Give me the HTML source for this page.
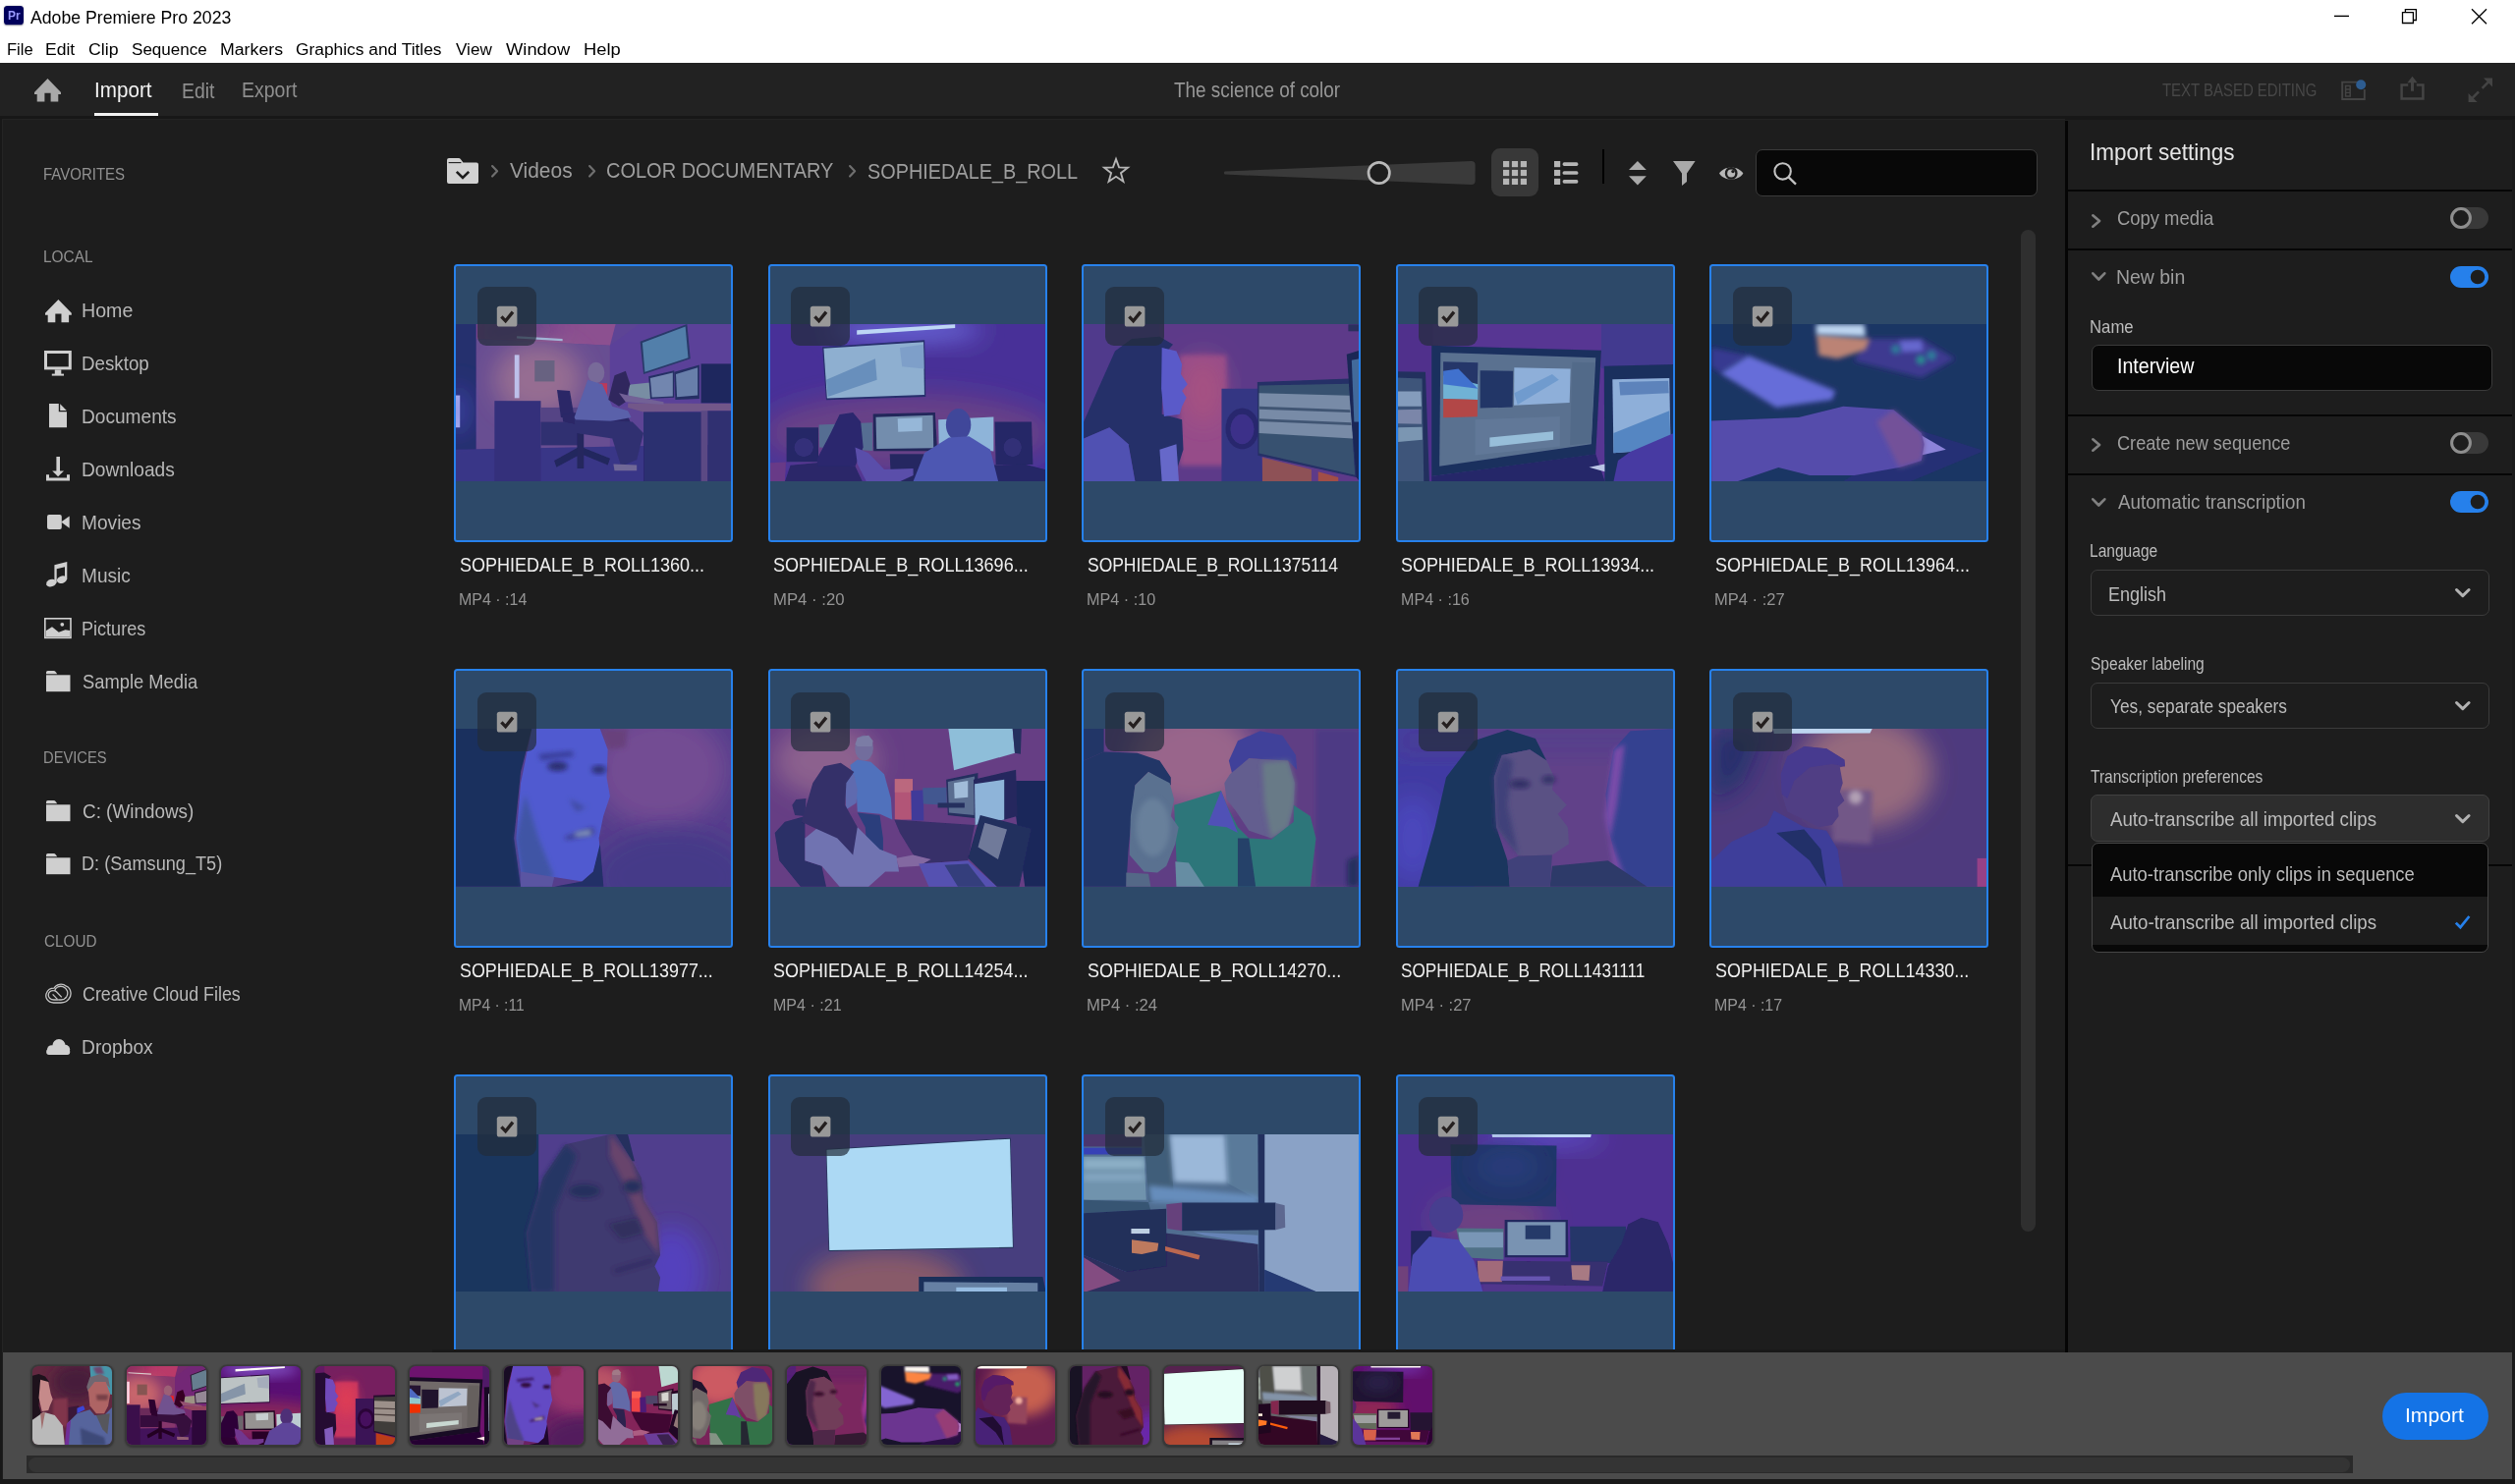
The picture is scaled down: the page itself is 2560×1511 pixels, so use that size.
<!DOCTYPE html>
<html lang="en"><head><meta charset="utf-8"><title>Adobe Premiere Pro 2023</title>
<style>
html,body{margin:0;padding:0}body{width:2560px;height:1511px;position:relative;overflow:hidden;background:#1d1d1d;font-family:"Liberation Sans", sans-serif}
.t{position:absolute;white-space:nowrap;line-height:1;transform-origin:0 50%;display:block}

.i{position:absolute;display:block;overflow:visible}
.b{position:absolute;display:block}
#titlebar{left:0;top:0;width:2560px;height:64px;background:#fff}
#wsbar{left:0;top:64px;width:2560px;height:54px;background:#222}
#wsline{left:0;top:118px;width:2560px;height:3.5px;background:#171717}
#leftedge{left:0;top:121px;width:2.2px;height:1390px;background:#181818}
#leftline{left:2.2px;top:121px;width:1px;height:1256px;background:#242424}
#ptop{left:2px;top:121px;width:2099.6px;height:1.4px;background:#232323}
#rightedge{left:2557.4px;top:121px;width:2.6px;height:1390px;background:#1a1a1a}
#tabline{left:96px;top:114.6px;width:65px;height:3.6px;background:#f2f2f2}
#vdiv{left:2101.6px;top:123.4px;width:3.2px;height:1254px;background:#050505}
.hl{position:absolute;left:2104.8px;width:452.6px;height:2px;background:#060606}
.card{position:absolute;width:283.8px;height:283.4px;box-sizing:border-box;border:2px solid #2781ec;border-radius:3.5px;background:#323232;overflow:hidden}
.card svg.im{position:absolute;left:-1px;top:59.1px;display:block}
.card .ov{position:absolute;left:0;top:0;right:0;bottom:0;background:#2680eb;opacity:.3}
.field{position:absolute;box-sizing:border-box;border:1.6px solid #3b3b3b;border-radius:7px}
#tray{left:3px;top:1377px;width:2554.4px;height:129px;background:#4b4b4b}
#below{left:0;top:1506px;width:2560px;height:5px;background:#191919}
.tt{position:absolute;top:1390.6px;width:81.2px;height:80.6px;border-radius:6px;overflow:hidden;box-shadow:0 0 0 1.6px #393939,0 1px 2px 1.5px rgba(0,0,0,.3)}
.tt svg{display:block}
#strack{left:27px;top:1482px;width:2368px;height:18.4px;background:#2a2a2a}
#sthumb{left:28.6px;top:1483.6px;width:2363px;height:15.2px;border-radius:8px;background:#343434}
#importbtn{left:2425.4px;top:1417.8px;width:108px;height:48.4px;border-radius:24.2px;background:#1473e6}
#gband{left:440px;top:1373.6px;width:1661.6px;height:3.6px;background:#191919}
#vscroll{left:2057.4px;top:234px;width:15px;height:1020px;border-radius:7.5px;background:#2f2f2f}

</style></head>
<body>
<svg width="0" height="0" style="position:absolute;left:0;top:0"><defs><filter id="bl" x="-50%" y="-50%" width="200%" height="200%"><feGaussianBlur stdDeviation="110"/></filter><filter id="bs" x="-30%" y="-30%" width="160%" height="160%"><feGaussianBlur stdDeviation="22"/></filter><filter id="bg" x="0" y="0" width="100%" height="100%"><feGaussianBlur stdDeviation="7"/></filter><g id="sc0"><rect x="0" y="0" width="2515" height="1452" fill="#762a6f"/><polygon points="200,17 1450,17 1400,210 200,150" fill="#b93a69"/><polygon points="200,17 1000,17 700,170 200,150" fill="#581752" filter="url(#bl)"/><polygon points="200,150 1400,210 1400,1437 200,1437" fill="#86376c"/><ellipse cx="760" cy="520" rx="400" ry="330" fill="#c7656c" filter="url(#bl)"/><polygon points="1400,210 1660,17 2490,17 2490,760 1400,760" fill="#732776"/><rect x="0" y="17" width="200" height="1420" fill="#250a39"/><polygon points="0,1150 2490,1100 2490,1437 0,1437" fill="#43135b"/><rect x="18" y="660" width="38" height="290" fill="#ffdcf9"/><ellipse cx="37" cy="800" rx="90" ry="230" fill="#6942c9" filter="url(#bl)" opacity=".6"/><rect x="545" y="295" width="42" height="390" fill="#ffdbea"/><polygon points="565,125 975,150 975,170 565,145" fill="#d7cbcc"/><rect x="725" y="345" width="178" height="190" fill="#865552"/><rect x="365" y="710" width="415" height="727" fill="#3b0f4b"/><rect x="780" y="770" width="330" height="340" fill="#6b2a5a"/><rect x="780" y="900" width="330" height="210" fill="#360c3d"/><polygon points="1670,175 2090,17 2120,330 1700,470" fill="#2c1a32"/><polygon points="1690,185 2075,40 2100,320 1712,450" fill="#667e8f"/><polygon points="1565,565 1760,545 1760,690 1565,700" fill="#9c9384"/><polygon points="1745,490 1975,435 1975,680 1762,690" fill="#250c2b"/><polygon points="1760,505 1962,455 1962,668 1775,678" fill="#948895"/><polygon points="1975,450 2200,385 2200,690 1985,700" fill="#250c2b"/><polygon points="1990,468 2185,410 2185,660 2000,675" fill="#867e8f"/><rect x="2215" y="375" width="275" height="355" fill="#1f0224"/><polygon points="1560,730 2490,735 2490,800 1700,810 1560,770" fill="#94455f"/><rect x="1700" y="810" width="530" height="627" fill="#2d073a"/><rect x="2215" y="800" width="60" height="637" fill="#733259"/><rect x="2275" y="800" width="215" height="637" fill="#360a3d"/><rect x="1300" y="550" width="75" height="160" fill="#fc1c1c"/><polygon points="925,610 1040,620 1080,860 960,860" fill="#2d022f"/><polygon points="900,1250 1130,1120 1400,1230 1380,1290 1140,1190 920,1310" fill="#230022"/><rect x="1105" y="900" width="60" height="420" fill="#250024"/><polygon points="970,830 1250,800 1560,850 1600,940 1300,960 980,900" fill="#2d022f"/><ellipse cx="1275" cy="455" rx="75" ry="95" fill="#9c6076"/><polygon points="1080,860 1200,520 1330,560 1420,760 1560,800 1590,860 1380,900 1100,900" fill="#71528f"/><polygon points="1080,880 1600,900 1700,1000 1640,1240 1500,1300 1420,1050 1100,1000" fill="#360f3d"/><polygon points="1430,1280 1640,1290 1640,1340 1440,1340" fill="#915d73"/><polygon points="1385,700 1440,480 1540,440 1580,560 1540,720 1480,760" fill="#360022"/><polygon points="1480,640 1560,660 1880,720 1880,745 1540,720" fill="#945271"/></g><g id="sc1"><rect x="0" y="0" width="2515" height="1452" fill="#580f74"/><ellipse cx="1250" cy="1000" rx="1300" ry="360" fill="#86275b" filter="url(#bl)"/><ellipse cx="1230" cy="70" rx="700" ry="120" fill="#916ae4" filter="url(#bl)" opacity=".8"/><polygon points="795,72 1675,20 1675,52 795,112" fill="#fffbf9"/><polygon points="486,222 1402,162 1412,672 520,702" fill="#280735"/><polygon points="498,236 1392,178 1400,655 528,686" fill="#bcc3c4"/><polygon points="520,520 960,330 975,520 535,672" fill="#8695a8"/><polygon points="1180,230 1392,200 1396,420 1200,400" fill="#a5adbb"/><polygon points="165,950 450,950 450,1260 165,1260" fill="#25002d"/><ellipse cx="320" cy="1130" rx="85" ry="85" fill="#3b0c48"/><polygon points="455,925 935,905 935,1160 460,1130" fill="#6b656c"/><polygon points="2030,900 2360,900 2372,1285 2040,1285" fill="#25002d"/><ellipse cx="2190" cy="1130" rx="80" ry="85" fill="#380c45"/><polygon points="1525,880 2020,855 2020,1165 1530,1100" fill="#bccbd1"/><polygon points="940,828 1496,814 1516,1162 945,1162" fill="#20001f"/><polygon points="965,856 1476,840 1482,1136 972,1142" fill="#969392"/><polygon points="1160,870 1380,862 1380,980 1165,990" fill="#c7cfd0"/><polygon points="1090,1190 1400,1190 1360,1437 1100,1437" fill="#280027"/><polygon points="10,1270 160,1262 150,1437 10,1437" fill="#861a5b"/><polygon points="150,1437 200,1292 500,1262 780,1300 845,1437" fill="#2d0032"/><polygon points="435,1240 560,1000 640,832 760,815 830,900 852,1130 780,1300 450,1300" fill="#2d0038"/><polygon points="780,1130 900,1180 1040,1330 1300,1320 1300,1382 1180,1437 880,1437 800,1280" fill="#71378f"/><polygon points="1520,1437 1600,1332 1900,1292 2300,1282 2490,1332 2490,1437" fill="#25002d"/><ellipse cx="1705" cy="925" rx="112" ry="145" fill="#4e2f77"/><polygon points="1300,1437 1400,1180 1620,1040 1800,1030 1990,1150 2062,1437" fill="#5e459a"/></g><g id="sc2"><rect x="0" y="0" width="2515" height="1452" fill="#761f5f"/><rect x="0" y="17" width="700" height="1420" fill="#631a64"/><rect x="880" y="295" width="420" height="1000" fill="#c7355e" filter="url(#bs)"/><ellipse cx="1090" cy="620" rx="170" ry="300" fill="#df3d54" filter="url(#bl)"/><rect x="2390" y="20" width="100" height="62" fill="#2d0724"/><polygon points="1255,600 1600,600 1622,1437 1255,1437" fill="#3b1456"/><ellipse cx="1440" cy="960" rx="150" ry="185" fill="#2b0438"/><ellipse cx="1440" cy="965" rx="105" ry="135" fill="#460f5e"/><polygon points="1575,540 2400,510 2472,1402 1580,1202" fill="#250c2d"/><polygon points="1590,572 2395,556 2450,1380 1590,1182" fill="#403d3a"/><polygon points="1590,640 2400,662 2430,1050 1590,1000" fill="#9c908a"/><polygon points="1590,760 2405,790 2408,815 1590,785" fill="#4e4240"/><polygon points="1590,870 2415,905 2418,930 1590,895" fill="#4e4240"/><polygon points="2375,290 2490,255 2490,1437 2462,1400" fill="#180019"/><polygon points="2420,342 2490,330 2490,900 2442,900" fill="#506079"/><polygon points="1620,1220 2060,1330 2060,1437 1620,1437" fill="#bc3d19"/><polygon points="2120,1350 2300,1400 2300,1437 2120,1437" fill="#d73700"/><polygon points="20,900 150,600 300,260 450,150 700,130 820,200 730,300 720,830 900,880 912,1150 820,1437 480,1437 420,1100 250,950 20,1050" fill="#250c32"/><polygon points="720,230 850,260 900,380 890,470 950,560 900,620 940,680 900,760 880,830 740,850 715,600" fill="#714abb"/><polygon points="20,1050 250,950 420,1100 480,1437 20,1437" fill="#633d9a"/><polygon points="700,1150 850,1100 872,1437 720,1437" fill="#835dbb"/></g><g id="sc3"><rect x="0" y="0" width="2515" height="1452" fill="#6e136e"/><rect x="0" y="17" width="330" height="1420" fill="#630c63"/><rect x="1840" y="17" width="650" height="400" fill="#501a68"/><polygon points="320,1390 1790,1190 1872,1437 320,1437" fill="#250032"/><polygon points="320,210 1840,255 1790,1192 320,1392" fill="#180c24"/><polygon points="400,275 1790,320 1750,1100 390,1300" fill="#716a69"/><polygon points="425,355 735,365 730,560 425,560" fill="#251432"/><polygon points="425,480 735,560 732,700 425,690" fill="#91c8cc"/><polygon points="425,690 732,700 730,852 425,862" fill="#ef2f00"/><polygon points="425,440 560,420 735,600 425,560" fill="#4e6ac2"/><polygon points="755,435 1050,440 1045,766 755,776" fill="#20142d"/><polygon points="1060,410 1565,420 1556,726 1058,750" fill="#bcc3d1"/><polygon points="1060,640 1400,470 1460,520 1090,745" fill="#91a7c2"/><polygon points="710,880 1470,850 1470,1120 710,1200" fill="#7b7574"/><polygon points="840,1040 1410,985 1410,1060 840,1126" fill="#c9d8d1"/><polygon points="1580,360 1780,365 1750,1090 1560,1110" fill="#66605e"/><polygon points="10,445 265,450 300,1437 10,1437" fill="#200c24"/><polygon points="10,500 235,510 250,1437 10,1437" fill="#484248"/><polygon points="15,625 225,625 230,760 15,760" fill="#aea8a8"/><polygon points="15,790 228,785 230,920 15,915" fill="#a1888d"/><polygon points="20,950 235,945 238,1060 20,1080" fill="#a1a09a"/><polygon points="1865,395 2490,380 2490,1437 1870,1437" fill="#180724"/><polygon points="1940,515 2450,505 2460,1050 2100,1170 1950,1180" fill="#bcc3d1"/><polygon points="1950,1000 2450,800 2460,1050 2100,1170 1950,1180" fill="#6b88b0"/><polygon points="2000,540 2440,530 2445,640 2010,660" fill="#7685a7"/><polygon points="1990,1250 2100,1170 2490,1000 2490,1437 1950,1437" fill="#561c83"/><polygon points="1730,1310 1870,1280 1870,1350" fill="#fce3e4"/></g><g id="sc4"><rect x="0" y="0" width="2515" height="1452" fill="#18132b"/><polygon points="20,230 350,300 100,460 20,400" fill="#401a69" filter="url(#bs)"/><polygon points="1400,150 1900,150 2200,330 1900,500 1300,350" fill="#481a69" filter="url(#bs)"/><polygon points="1700,170 1900,160 1920,260 1720,270" fill="#835dc2" filter="url(#bs)"/><ellipse cx="1670" cy="245" rx="42" ry="42" fill="#337877" filter="url(#bs)"/><ellipse cx="1895" cy="340" rx="42" ry="42" fill="#2c9369" filter="url(#bs)"/><ellipse cx="1990" cy="300" rx="46" ry="46" fill="#337877" filter="url(#bs)"/><polygon points="960,110 1440,150 1400,250 1150,330 980,300" fill="#fc8543" filter="url(#bs)"/><polygon points="955,20 1390,20 1400,130 960,112" fill="#fff9f2" filter="url(#bs)"/><polygon points="100,460 350,300 1130,620 1100,700 600,770" fill="#8365d1" filter="url(#bs)"/><polygon points="1200,1437 1900,980 2460,1160 1800,1437" fill="#280f43"/><polygon points="1500,1130 1900,1020 2120,1150 1900,1200 1650,1180" fill="#b985d1"/><polygon points="20,890 800,860 1200,760 1650,790 1900,1000 1925,1100 1900,1250 1700,1312 1300,1382 900,1382 620,1312 250,1437 20,1437" fill="#6b3590"/><polygon points="1650,790 1900,1000 1925,1100 1900,1250 1700,1312 1600,1100 1500,900" fill="#963d76" filter="url(#bs)"/></g><g id="sc5"><rect x="0" y="0" width="2515" height="1452" fill="#6b2263"/><ellipse cx="1850" cy="380" rx="600" ry="520" fill="#96356d" filter="url(#bl)"/><ellipse cx="1950" cy="1350" rx="700" ry="420" fill="#531a5d" filter="url(#bl)"/><polygon points="10,10 700,10 600,400 540,1000 600,1437 10,1437" fill="#180c24"/><polygon points="1310,10 1560,10 1540,180 1380,200" fill="#86274d" filter="url(#bs)"/><polygon points="700,10 1310,10 1380,200 1370,450 1400,620 1340,800 1300,1000 1310,1100 1250,1300 1150,1390 900,1350 620,1437 560,1000 600,500" fill="#634ac4"/><polygon points="560,1000 620,1437 900,1350 760,1000 640,600" fill="#4e4287" filter="url(#bs)"/><polygon points="600,1300 900,1350 880,1437 600,1437" fill="#714283"/><polygon points="1250,1300 1310,1050 1342,1437 900,1437 1150,1390" fill="#20072d"/><ellipse cx="930" cy="350" rx="92" ry="44" fill="#300a40" filter="url(#bs)"/><ellipse cx="1300" cy="380" rx="66" ry="36" fill="#300a40" filter="url(#bs)"/><polygon points="760,240 1060,210 1080,260 780,300" fill="#432277" filter="url(#bs)"/><polygon points="990,990 1250,900 1262,962 1010,1012" fill="#401a5b" filter="url(#bs)"/><polygon points="1080,950 1230,920 1230,970 1090,986" fill="#b9adae" filter="url(#bs)"/><polygon points="1030,640 1180,720 1230,700 1100,760" fill="#4e3584" filter="url(#bs)"/></g><g id="sc6"><rect x="0" y="0" width="2515" height="1452" fill="#832459"/><ellipse cx="520" cy="300" rx="460" ry="320" fill="#b95266" filter="url(#bl)"/><polygon points="1615,10 2190,10 2210,230 1665,386" fill="#bcd8d1"/><polygon points="2190,10 2270,10 2262,240 2210,230" fill="#250724"/><polygon points="2220,480 2490,480 2490,1437 2300,1437 2220,800" fill="#18001f"/><rect x="1135" y="465" width="160" height="366" fill="#ef4245"/><rect x="1135" y="465" width="160" height="120" fill="#fc5d50"/><polygon points="1280,570 1390,565 1395,840 1285,840" fill="#4e1a76"/><polygon points="1385,545 1600,540 1600,700 1390,690" fill="#504569"/><polygon points="1595,470 1880,410 1870,820 1610,790" fill="#250724"/><polygon points="1610,490 1850,440 1845,790 1620,770" fill="#716569"/><polygon points="1665,500 1790,480 1790,630 1670,640" fill="#d7d6d1"/><polygon points="1840,470 2220,380 2232,800 2120,830 1855,882" fill="#250422"/><polygon points="1850,510 2115,470 2115,830 1855,880" fill="#bccbd1"/><polygon points="1130,830 1850,880 1790,1200 1350,1230 1180,950" fill="#400732"/><rect x="1520" y="680" width="240" height="44" fill="#250c24"/><ellipse cx="860" cy="185" rx="82" ry="115" fill="#94657c"/><polygon points="780,150 800,90 900,70 940,120 930,170 800,170" fill="#a17a87"/><polygon points="735,340 800,290 920,310 1040,420 1100,640 1112,830 1000,780 800,760 790,560" fill="#636aa8"/><polygon points="800,770 1000,790 1030,1000 1030,1300 900,1300 870,900" fill="#2d224e"/><polygon points="60,950 150,850 330,800 330,1200 480,1250 520,1437 290,1437 100,1200" fill="#2d072d"/><polygon points="215,700 250,650 340,640 330,800 240,790" fill="#360a32"/><polygon points="330,1000 450,900 650,1000 800,900 900,1000 1000,1100 1150,1160 1172,1300 1050,1300 900,1437 640,1437 480,1250 330,1200" fill="#916d98"/><polygon points="690,440 770,420 800,560 790,680 700,740 690,600" fill="#796095"/><polygon points="300,850 400,500 500,350 650,320 770,400 700,500 690,700 800,900 760,1150 620,1000 400,900" fill="#3b0c32"/><polygon points="1150,1180 1300,1150 1460,1190 1350,1250 1170,1260" fill="#ac5d82"/><polygon points="1350,1230 1790,1200 2050,1437 1440,1437" fill="#6b3d99"/><polygon points="1580,1240 1790,1230 1950,1437 1700,1437" fill="#3b224e"/><polygon points="1790,1180 1900,790 2360,910 2250,1437 2050,1437" fill="#200724"/><polygon points="1880,1080 1940,860 2140,920 2060,1190" fill="#917877"/></g><g id="sc7"><rect x="0" y="0" width="2515" height="1452" fill="#792259"/><ellipse cx="1000" cy="280" rx="560" ry="460" fill="#cc5a62" filter="url(#bl)"/><rect x="2100" y="10" width="390" height="1427" fill="#5e1a58" filter="url(#bs)"/><polygon points="2380,1200 2490,1150 2490,1437 2380,1437" fill="#250724" filter="url(#bs)"/><polygon points="1320,300 1400,120 1600,30 1800,70 1920,250 1930,380 1850,300 1500,280 1350,420" fill="#4e2777"/><polygon points="1330,420 1500,280 1850,300 1910,500 1900,700 1850,900 1700,1000 1500,930 1380,750 1300,650 1280,500" fill="#7e4f67"/><polygon points="1620,320 1850,300 1910,500 1900,700 1850,900 1700,1000 1640,700" fill="#86785b" filter="url(#bs)"/><polygon points="830,700 1250,570 1300,700 1400,900 1500,1000 1700,1010 1900,850 1900,700 2050,800 2100,1000 2050,1437 1050,1437 850,1200" fill="#337248"/><polygon points="1130,880 1250,570 1300,700 1400,950 1300,900" fill="#633da0"/><polygon points="1400,1000 1500,1000 1560,1437 1400,1437" fill="#252732"/><polygon points="20,10 200,10 200,220 20,300" fill="#20142d"/><polygon points="20,300 200,220 500,230 700,300 800,450 800,520 600,400 480,520 450,800 420,1100 400,1437 20,1437" fill="#20142d"/><polygon points="480,520 600,400 790,500 830,650 800,800 870,900 840,1050 760,1250 680,1310 560,1300 430,1150 440,800" fill="#716a69"/><ellipse cx="640" cy="900" rx="150" ry="260" fill="#868079" filter="url(#bs)"/><polygon points="400,1310 600,1320 620,1437 400,1437" fill="#695d5b"/><polygon points="840,1210 960,1220 1100,1437 850,1437" fill="#839384"/></g><g id="sc8"><rect x="0" y="0" width="2515" height="1452" fill="#7b275f"/><rect x="0" y="10" width="700" height="1427" fill="#4e1f84"/><ellipse cx="150" cy="1000" rx="240" ry="380" fill="#5b2da7" filter="url(#bl)"/><rect x="0" y="10" width="2515" height="220" fill="#612266" filter="url(#bl)" opacity=".7"/><polygon points="1950,200 2100,30 2490,10 2490,1437 2250,1437 2000,1300 1900,900 1880,600" fill="#3b2769"/><polygon points="1870,800 1950,200 2050,150 1980,700 1920,1000 2050,1350 1950,1250" fill="#9e358d" filter="url(#bs)"/><polygon points="1400,1250 1900,1200 2250,1437 1380,1437" fill="#331a32"/><polygon points="200,1437 350,900 450,450 700,120 1000,20 1250,100 1350,300 1200,200 950,250 880,450 900,900 1000,1200 1020,1437" fill="#181324"/><polygon points="950,250 1200,200 1350,300 1420,450 1400,560 1530,700 1450,780 1540,900 1550,1050 1400,1150 1100,1160 900,900 880,450" fill="#713d59"/><polygon points="880,450 950,250 1050,300 1000,700 1100,1160 900,900" fill="#4e2748" filter="url(#bs)"/><polygon points="1000,1200 1100,1160 1400,1150 1380,1437 1020,1437" fill="#4e2748"/><ellipse cx="1110" cy="510" rx="96" ry="42" fill="#3b0f2f" filter="url(#bs)"/><ellipse cx="1370" cy="470" rx="64" ry="36" fill="#3b0f2f" filter="url(#bs)"/></g><g id="sc9"><rect x="0" y="0" width="2515" height="1452" fill="#611c4f"/><ellipse cx="1400" cy="400" rx="600" ry="500" fill="#c76050" filter="url(#bl)"/><polygon points="10,10 500,10 300,500 10,700" fill="#280f35" filter="url(#bl)"/><polygon points="1120,560 1460,570 1450,1050 1100,1030" fill="#94455c" filter="url(#bs)"/><ellipse cx="1310" cy="630" rx="62" ry="62" fill="#efad9c" filter="url(#bs)"/><rect x="2400" y="1180" width="90" height="257" fill="#c7275b"/><polygon points="570,10 1460,10 1440,50 580,56" fill="#fff9f2"/><polygon points="650,600 640,420 700,260 850,170 1050,190 1210,290 1216,350 1170,360 1196,500 1170,580 1210,660 1150,720 1160,800 1100,880 980,900 850,830 700,760" fill="#632258"/><polygon points="640,420 700,260 850,170 1050,190 1210,290 1216,350 1100,330 900,360 760,480 700,640 650,600" fill="#561a67"/><polygon points="20,1200 200,1030 520,880 580,750 850,900 1050,930 1150,1100 1200,1437 20,1437" fill="#482277"/><polygon points="600,950 850,920 1000,1100 1050,1437 900,1200" fill="#200c32"/></g><g id="sc10"><rect x="0" y="0" width="2515" height="1452" fill="#632265"/><ellipse cx="1950" cy="1250" rx="300" ry="420" fill="#6927a9" filter="url(#bl)"/><rect x="0" y="8" width="760" height="1430" fill="#181324"/><polygon points="700,1437 650,900 800,400 1000,100 1400,10 1450,10 1600,250 1680,400 1700,600 1820,800 1840,1000 1850,1100 1800,1200 1850,1300 1830,1437" fill="#4b1a3a"/><polygon points="700,1437 650,900 800,400 1000,100 1100,200 900,700 900,1437" fill="#28142a" filter="url(#bs)"/><polygon points="1400,10 1600,250 1700,600 1820,800 1840,1100 1700,900 1550,500 1400,200" fill="#862a34" filter="url(#bs)"/><polygon points="1450,10 1560,10 1620,250 1600,250" fill="#250c24"/><ellipse cx="1170" cy="520" rx="140" ry="62" fill="#280a22" filter="url(#bs)"/><ellipse cx="1600" cy="480" rx="86" ry="60" fill="#280a22" filter="url(#bs)"/><polygon points="1430,1230 1780,1130 1790,1160 1450,1260" fill="#330724" filter="url(#bs)"/><polygon points="1380,820 1640,760 1700,900 1500,960" fill="#380c24" filter="url(#bs)"/></g><g id="sc11"><rect x="0" y="0" width="2515" height="1452" fill="#56224f"/><ellipse cx="1050" cy="1380" rx="700" ry="330" fill="#b44a33" filter="url(#bl)"/><polygon points="518,142 2172,42 2198,1034 543,1064" fill="#201419"/><polygon points="524,148 2166,50 2192,1026 549,1056" fill="#e7fff8"/><polygon points="1350,1295 2460,1295 2490,1437 1350,1437" fill="#180c1f"/><polygon points="1395,1340 2415,1350 2415,1437 1395,1437" fill="#838084"/><rect x="1685" y="1390" width="455" height="47" fill="#c7d6df"/></g><g id="sc12"><rect x="0" y="0" width="2515" height="1452" fill="#636569"/><polygon points="20,10 540,10 540,120 20,120" fill="#5b1437"/><rect x="20" y="130" width="520" height="60" fill="#4027a0"/><polygon points="20,210 560,210 580,600 20,600" fill="#919b92"/><rect x="20" y="230" width="540" height="90" fill="#b9c3b6" filter="url(#bs)"/><rect x="20" y="360" width="540" height="70" fill="#acb5ae" filter="url(#bs)"/><polygon points="20,600 600,620 620,700 20,720" fill="#404240"/><polygon points="560,10 790,10 830,600 600,620" fill="#4e4f48"/><polygon points="1290,10 1580,10 1580,600 1310,450" fill="#717877"/><polygon points="790,10 1285,10 1310,450 830,440" fill="#cfd0d1" filter="url(#bs)"/><polygon points="600,470 1580,560 1580,640 620,620" fill="#8393a8" filter="url(#bs)"/><polygon points="1640,10 2490,10 2490,1437 2120,1437 1640,1230" fill="#b6b0b6"/><polygon points="1580,10 1640,10 1640,1437 1590,1437" fill="#200c24"/><polygon points="1640,1230 2120,1437 1640,1437" fill="#251a40"/><polygon points="750,900 1580,1000 1590,1437 20,1437 20,1100 400,1250" fill="#330724"/><polygon points="1000,890 1580,920 1580,1000 1100,920" fill="#8385a0"/><polygon points="20,1120 350,1330 20,1437" fill="#ac3553"/><polygon points="20,720 760,680 760,1200 400,1250 20,1100" fill="#20071f"/><polygon points="900,625 1740,625 1740,870 900,880" fill="#200c1f"/><polygon points="1740,630 1820,650 1825,850 1740,870" fill="#765d69"/><polygon points="760,640 900,625 900,880 770,860" fill="#83274e"/><rect x="445" y="860" width="165" height="45" fill="#fff1df"/><polygon points="450,960 690,990 680,1060 540,1090 450,1080" fill="#ff7824"/><polygon points="750,1020 1060,1100 1050,1140 750,1060" fill="#fc5d0c"/></g><g id="sc13"><rect x="0" y="0" width="2515" height="1452" fill="#610f6c"/><ellipse cx="850" cy="780" rx="520" ry="240" fill="#8e2754" filter="url(#bl)"/><ellipse cx="1300" cy="30" rx="560" ry="100" fill="#7e4ad6" filter="url(#bl)" opacity=".7"/><polygon points="860,10 1750,10 1745,36 865,36" fill="#fff9f9"/><polygon points="490,100 1440,110 1435,660 500,640" fill="#201432"/><ellipse cx="1000" cy="300" rx="300" ry="160" fill="#2b244b" filter="url(#bl)"/><polygon points="135,880 320,880 320,1100 135,1200" fill="#200024"/><polygon points="540,855 965,860 965,1140 600,1120" fill="#636a5b"/><polygon points="560,890 960,890 960,1030 580,1030" fill="#9ea0a0"/><polygon points="975,780 1540,780 1545,1120 975,1120" fill="#200024"/><rect x="1000" y="800" width="520" height="300" fill="#9e9b9a"/><rect x="1160" y="830" width="225" height="125" fill="#251a32"/><polygon points="1560,840 2060,840 2060,1170 1565,1170" fill="#251432"/><polygon points="720,1150 1900,1160 1850,1380 740,1360" fill="#40073a"/><polygon points="730,1150 960,1150 950,1340 740,1340" fill="#d7604a"/><polygon points="1570,1190 1740,1190 1730,1330 1580,1320" fill="#e17856"/><rect x="940" y="1290" width="440" height="40" fill="#834299"/><polygon points="780,1360 1850,1380 1850,1437 780,1437" fill="#631464"/><rect x="10" y="1200" width="100" height="237" fill="#91274b"/><ellipse cx="450" cy="735" rx="152" ry="162" fill="#562268"/><polygon points="110,1437 150,1100 300,930 560,960 700,1150 780,1437" fill="#5b359a"/><polygon points="1850,1437 1900,1200 2020,1000 2080,820 2200,760 2350,800 2440,1000 2490,1200 2490,1437" fill="#2d0032"/></g><g id="sc14"><rect x="540" y="0" width="1420" height="1420" fill="#622840"/><ellipse cx="1321.0" cy="284.0" rx="420" ry="330" fill="#461c3a" filter="url(#bl)"/><polygon points="909,596 1165,568 1165,1079 909,1108" fill="#80344c" filter="url(#bs)"/><polygon points="1179,738 1364,710 1364,1079 1179,1108" fill="#3a1838"/><polygon points="1562,0 1960,0 1960,511 1591,426" fill="#4696aa"/><polygon points="1619,28 1761,0 1818,142 1676,142" fill="#6e466e" filter="url(#bs)"/><polygon points="540,170 654,142 767,185 838,284 682,355 654,710 725,937 568,1051 540,994" fill="#1e121c"/><polygon points="682,241 824,284 867,497 902,596 852,710 824,795 710,809 654,568" fill="#c68a8a"/><polygon points="540,966 739,824 938,880 1080,1065 1115,1420 540,1420" fill="#bababa"/><polygon points="682,852 767,824 710,1136" fill="#a06e6e"/><polygon points="1506,369 1562,199 1747,142 1889,213 1924,398 1818,284 1648,284 1534,469" fill="#706670"/><polygon points="1534,426 1648,284 1846,284 1924,497 1889,710 1818,852 1676,852 1562,710" fill="#ae6464"/><polygon points="1676,511 1889,511 1875,611 1690,611" fill="#784046" filter="url(#bs)"/><polygon points="1136,1420 1165,1022 1335,852 1562,781 1648,880 1818,880 1960,738 1960,1420" fill="#56649c"/><polygon points="1335,852 1477,781 1449,710 1335,753" fill="#3c46d7"/><polygon points="1676,880 1917,852 1875,1221 1790,1136" fill="#56565c"/><polygon points="1392,1108 1818,1278 1846,1420 1420,1420" fill="#3e4878" filter="url(#bs)"/><polygon points="1115,1420 1151,1037 1222,966 1186,1420" fill="#702e98"/></g></defs></svg>
<div class="b" id="titlebar"></div>
<div class="b" style="left:3.8px;top:5.8px;width:20.4px;height:19px;border-radius:3.6px;background:#00005b;box-shadow:0 .5px 1.5px rgba(0,0,40,.5)"></div>
<span class="t" style="left:7.88px;top:9.89px;font-size:12.65px;font-weight:700;color:#9a9aff;transform:scaleX(0.9454);">Pr</span>
<span class="t" style="left:31.20px;top:9.69px;font-size:17.73px;color:#000;transform:scaleX(0.9971);">Adobe Premiere Pro 2023</span>
<span class="t" style="left:6.57px;top:42.16px;font-size:17.30px;color:#000;transform:scaleX(0.9590);">File</span>
<span class="t" style="left:45.99px;top:42.16px;font-size:17.30px;color:#000;transform:scaleX(1.0155);">Edit</span>
<span class="t" style="left:90.21px;top:42.16px;font-size:17.30px;color:#000;transform:scaleX(1.0245);">Clip</span>
<span class="t" style="left:134.42px;top:42.16px;font-size:17.30px;color:#000;transform:scaleX(0.9871);">Sequence</span>
<span class="t" style="left:223.98px;top:42.16px;font-size:17.30px;color:#000;transform:scaleX(1.0254);">Markers</span>
<span class="t" style="left:301.13px;top:42.16px;font-size:17.30px;color:#000;transform:scaleX(1.0042);">Graphics and Titles</span>
<span class="t" style="left:463.90px;top:42.16px;font-size:17.30px;color:#000;transform:scaleX(0.9889);">View</span>
<span class="t" style="left:515.30px;top:42.16px;font-size:17.30px;color:#000;transform:scaleX(1.0608);">Window</span>
<span class="t" style="left:593.93px;top:42.16px;font-size:17.30px;color:#000;transform:scaleX(1.0607);">Help</span>
<svg class="i" style="left:2370px;top:4px" width="170" height="26" viewBox="0 0 170 26" ><path d="M6 12.4 H21" stroke="#000" stroke-width="1.4" fill="none"/><path d="M75.5 8.6 H86.4 V19.5 H75.5 Z M78.4 8.4 V5.7 H89.4 V16.5 H86.6" stroke="#000" stroke-width="1.3" fill="none"/><path d="M146 5.2 L161 20.2 M161 5.2 L146 20.2" stroke="#000" stroke-width="1.3" fill="none"/></svg>
<div class="b" id="wsbar"></div><div class="b" id="wsline"></div><div class="b" id="leftedge"></div><div class="b" id="leftline"></div><div class="b" id="ptop"></div><div class="b" id="rightedge"></div>
<svg class="i" style="left:35.2px;top:80.4px" width="27" height="23.6" viewBox="0 0 27 23" preserveAspectRatio="none"><path d="M13.5 0 L27 13.6 L27 15.6 L24.3 15.6 L24.3 23 L16.6 23 L16.6 14.4 L10.4 14.4 L10.4 23 L2.7 23 L2.7 15.6 L0 15.6 L0 13.6 Z" fill="#a9a9a9"/></svg>
<span class="t" style="left:95.64px;top:82.21px;font-size:21.37px;color:#f2f2f2;transform:scaleX(0.9663);">Import</span>
<span class="t" style="left:184.94px;top:83.21px;font-size:21.37px;color:#8e8e8e;transform:scaleX(0.9103);">Edit</span>
<span class="t" style="left:245.94px;top:82.21px;font-size:21.37px;color:#8e8e8e;transform:scaleX(0.9120);">Export</span>
<div class="b" id="tabline"></div>
<span class="t" style="left:1194.92px;top:81.26px;font-size:21.66px;color:#979797;transform:scaleX(0.8727);">The science of color</span>
<span class="t" style="left:2201.10px;top:84.09px;font-size:17.73px;color:#474747;transform:scaleX(0.8430);">TEXT BASED EDITING</span>
<svg class="i" style="left:2383px;top:78px" width="28" height="26" viewBox="0 0 28 26" ><path d="M18.5 5.6 H1.2 V23 H23.8 V13" fill="none" stroke="#444" stroke-width="1.9"/><rect x="4.6" y="9.4" width="4.6" height="10.6" fill="none" stroke="#444" stroke-width="1.5"/><path d="M4.6 13 H9.2 M4.6 16.4 H9.2" stroke="#444" stroke-width="1.3"/><circle cx="20.2" cy="8.2" r="5" fill="#2d5c90"/></svg>
<svg class="i" style="left:2443px;top:77px" width="26" height="26" viewBox="0 0 26 26" ><path d="M8.2 9.6 H1.6 V23.6 H23.4 V9.6 H16.8" fill="none" stroke="#444" stroke-width="2.5"/><path d="M12.5 15.8 V5" stroke="#444" stroke-width="3" fill="none"/><path d="M7.4 7.2 L12.5 0.8 L17.6 7.2 Z" fill="#444"/></svg>
<svg class="i" style="left:2511.6px;top:78.6px" width="26" height="26" viewBox="0 0 26 26" ><path d="M14.6 10.8 L22 3.4 M3.6 21.8 L11 14.4" stroke="#444" stroke-width="2.6" fill="none"/><path d="M16 0.6 H25 V9.6 Z M0.6 16 V25 H9.6 Z" fill="#444"/></svg>
<span class="t" style="left:43.90px;top:170.36px;font-size:15.99px;color:#929292;transform:scaleX(0.9391);">FAVORITES</span>
<span class="t" style="left:44.06px;top:253.34px;font-size:16.13px;color:#929292;transform:scaleX(0.9571);">LOCAL</span>
<span class="t" style="left:44.12px;top:763.44px;font-size:16.13px;color:#929292;transform:scaleX(0.9138);">DEVICES</span>
<span class="t" style="left:44.54px;top:950.44px;font-size:16.13px;color:#929292;transform:scaleX(0.9475);">CLOUD</span>
<span class="t" style="left:83.23px;top:305.72px;font-size:20.06px;color:#b8b8b8;transform:scaleX(0.9790);">Home</span>
<span class="t" style="left:83.30px;top:359.62px;font-size:20.06px;color:#b8b8b8;transform:scaleX(0.9347);">Desktop</span>
<span class="t" style="left:83.27px;top:413.72px;font-size:20.06px;color:#b8b8b8;transform:scaleX(0.9532);">Documents</span>
<span class="t" style="left:83.27px;top:467.72px;font-size:20.06px;color:#b8b8b8;transform:scaleX(0.9564);">Downloads</span>
<span class="t" style="left:83.27px;top:521.62px;font-size:20.06px;color:#b8b8b8;transform:scaleX(0.9539);">Movies</span>
<span class="t" style="left:83.27px;top:575.72px;font-size:20.06px;color:#b8b8b8;transform:scaleX(0.9509);">Music</span>
<span class="t" style="left:83.35px;top:629.62px;font-size:20.06px;color:#b8b8b8;transform:scaleX(0.9011);">Pictures</span>
<span class="t" style="left:84.07px;top:684.42px;font-size:20.06px;color:#b8b8b8;transform:scaleX(0.9154);">Sample Media</span>
<span class="t" style="left:83.86px;top:815.62px;font-size:20.06px;color:#b8b8b8;transform:scaleX(0.9417);">C: (Windows)</span>
<span class="t" style="left:83.35px;top:869.22px;font-size:20.06px;color:#b8b8b8;transform:scaleX(0.9054);">D: (Samsung_T5)</span>
<span class="t" style="left:83.91px;top:1002.42px;font-size:20.06px;color:#b8b8b8;transform:scaleX(0.8906);">Creative Cloud Files</span>
<span class="t" style="left:83.26px;top:1055.82px;font-size:20.06px;color:#b8b8b8;transform:scaleX(0.9593);">Dropbox</span>
<svg class="i" style="left:45.6px;top:304.6px" width="26.8" height="23.2" viewBox="0 0 27 23" preserveAspectRatio="none"><path d="M13.5 0 L27 13.6 L27 15.6 L24.3 15.6 L24.3 23 L16.6 23 L16.6 14.4 L10.4 14.4 L10.4 23 L2.7 23 L2.7 15.6 L0 15.6 L0 13.6 Z" fill="#cfcfcf"/></svg>
<svg class="i" style="left:45.1px;top:357.4px" width="27.8" height="25.6" viewBox="0 0 27.8 25.6" ><rect x="1.5" y="1.5" width="24.8" height="16.4" fill="none" stroke="#cfcfcf" stroke-width="3"/><rect x="10.8" y="19.4" width="6.5" height="4.6" fill="#cfcfcf"/><rect x="7.8" y="23.6" width="12.2" height="2" fill="#cfcfcf"/></svg>
<svg class="i" style="left:50px;top:411.4px" width="18" height="24.2" viewBox="0 0 18 24.2" ><path d="M0 0 H9.8 V8.3 H18 V24.2 H0 Z" fill="#cfcfcf"/><path d="M11.2 0.3 L17.8 6.9 H11.2 Z" fill="#cfcfcf"/></svg>
<svg class="i" style="left:47px;top:465.1px" width="24" height="24.6" viewBox="0 0 24 24.6" ><rect x="10.4" y="0" width="3.6" height="15.5" fill="#cfcfcf"/><path d="M6.2 14.4 H18 L12.1 20.2 Z" fill="#cfcfcf"/><path d="M0 18.3 H3 V21.6 H21 V18.3 H24 V24.6 H0 Z" fill="#cfcfcf"/></svg>
<svg class="i" style="left:48.3px;top:523.9px" width="22.7" height="15.1" viewBox="0 0 22.7 15.1" ><rect x="0" y="0" width="14.8" height="15.1" rx="2" fill="#cfcfcf"/><path d="M14.2 7.6 L22.7 1.6 V13.7 Z" fill="#cfcfcf"/></svg>
<svg class="i" style="left:47px;top:572.4px" width="21.3" height="25.4" viewBox="0 0 21.3 25.4" ><path d="M8.4 3.3 L21.3 0 V18 H19 V5.2 L10.7 7.3 V21.5 H8.4 Z" fill="#cfcfcf"/><ellipse cx="5.2" cy="21.6" rx="5.2" ry="3.7" transform="rotate(-18 5.2 21.6)" fill="#cfcfcf"/><ellipse cx="16" cy="18.2" rx="5.2" ry="3.7" transform="rotate(-18 16 18.2)" fill="#cfcfcf"/></svg>
<svg class="i" style="left:45.1px;top:628.9px" width="27.8" height="21.2" viewBox="0 0 27.8 21.2" ><rect x="0.8" y="0.8" width="26.2" height="19.6" fill="none" stroke="#cfcfcf" stroke-width="1.6"/><path d="M1.8 13.2 L8 9.2 L14.8 14.8 L21.5 12.2 L26 13 V19.6 H1.8 Z" fill="#cfcfcf"/><circle cx="18.3" cy="6.8" r="1.9" fill="#cfcfcf"/></svg>
<svg class="i" style="left:46.7px;top:682.8px" width="24.5" height="21.2" viewBox="0 0 24.5 21.2" ><path d="M0 3.3 V1.6 Q0 0 1.6 0 H7.6 Q9 0 9.8 1.2 L11.2 3.3 Z" fill="#cfcfcf"/><rect x="0" y="4.3" width="24.5" height="16.9" fill="#cfcfcf"/></svg>
<svg class="i" style="left:46.7px;top:815px" width="24.5" height="21.2" viewBox="0 0 24.5 21.2" ><path d="M0 3.3 V1.6 Q0 0 1.6 0 H7.6 Q9 0 9.8 1.2 L11.2 3.3 Z" fill="#cfcfcf"/><rect x="0" y="4.3" width="24.5" height="16.9" fill="#cfcfcf"/></svg>
<svg class="i" style="left:46.7px;top:868.6px" width="24.5" height="21.2" viewBox="0 0 24.5 21.2" ><path d="M0 3.3 V1.6 Q0 0 1.6 0 H7.6 Q9 0 9.8 1.2 L11.2 3.3 Z" fill="#cfcfcf"/><rect x="0" y="4.3" width="24.5" height="16.9" fill="#cfcfcf"/></svg>
<svg class="i" style="left:45.7px;top:1001.2px" width="26.8" height="20.8" viewBox="0 0 26.8 20.8" ><path d="M9 5.2 C11 1 17.5 -0.2 21.5 3.2 C26.6 5.2 27.4 12.6 24 16.2 C22 19.2 18.5 20.2 15 20 H8.5 C2.6 20 -0.6 14.6 1.4 10 C2.6 7 5.6 5.2 9 5.2 Z" fill="none" stroke="#c4c4c4" stroke-width="1.3"/><path d="M13.2 17 H8.8 C5.4 17 3.2 14.6 3.2 12 C3.2 9.2 5.6 7.4 8.4 7.6 C9.6 7.6 10.6 8 11.4 8.8 L16.8 14.4" fill="none" stroke="#c4c4c4" stroke-width="1.3"/><path d="M9.6 7.8 C10.4 4.6 14.2 2.4 18 3.6 C22.4 5 24 10 21.8 13.8 C20.4 16 18.6 17 16.2 17 H13.2" fill="none" stroke="#c4c4c4" stroke-width="1.3"/><path d="M7.6 11.4 L12.4 16.4" fill="none" stroke="#c4c4c4" stroke-width="1.3"/></svg>
<svg class="i" style="left:47px;top:1057.5px" width="24.2" height="15.9" viewBox="0 0 24.2 15.9" ><circle cx="13" cy="6.6" r="6.6" fill="#cfcfcf"/><circle cx="5.6" cy="10.8" r="4.6" fill="#cfcfcf"/><circle cx="19.2" cy="10.8" r="5" fill="#cfcfcf"/><rect x="0.2" y="10" width="24" height="5.9" rx="2.6" fill="#cfcfcf"/></svg>
<svg class="i" style="left:455px;top:161px" width="32" height="26" viewBox="0 0 32 26" ><path d="M0 5 V2 Q0 0 2 0 H11.6 Q13.2 0 14.2 1.4 L16.4 4.4 H30 Q32 4.4 32 6.4 V24 Q32 26 30 26 H2 Q0 26 0 24 Z" fill="#d2d2d2"/><path d="M1.6 4.6 H14.4" stroke="#1d1d1d" stroke-width="1.1"/><path d="M9.8 13.8 L16 20 L22.2 13.8" fill="none" stroke="#1d1d1d" stroke-width="2.6"/></svg>
<svg class="i" style="left:499.6px;top:167.6px" width="7.2" height="12.6" viewBox="0 0 7.2 12.6" ><path d="M1.1 1.1 L6.1 6.3 L1.1 11.5" fill="none" stroke="#6f6f6f" stroke-width="2.2" stroke-linecap="round" stroke-linejoin="round"/></svg>
<svg class="i" style="left:599px;top:167.6px" width="7.2" height="12.6" viewBox="0 0 7.2 12.6" ><path d="M1.1 1.1 L6.1 6.3 L1.1 11.5" fill="none" stroke="#6f6f6f" stroke-width="2.2" stroke-linecap="round" stroke-linejoin="round"/></svg>
<svg class="i" style="left:864.3px;top:167.6px" width="7.2" height="12.6" viewBox="0 0 7.2 12.6" ><path d="M1.1 1.1 L6.1 6.3 L1.1 11.5" fill="none" stroke="#6f6f6f" stroke-width="2.2" stroke-linecap="round" stroke-linejoin="round"/></svg>
<span class="t" style="left:519.00px;top:162.28px;font-size:22.82px;color:#9d9d9d;transform:scaleX(0.9173);">Videos</span>
<span class="t" style="left:617.40px;top:162.48px;font-size:22.82px;color:#9d9d9d;transform:scaleX(0.8762);">COLOR DOCUMENTARY</span>
<span class="t" style="left:882.81px;top:162.68px;font-size:22.82px;color:#9d9d9d;transform:scaleX(0.8706);clip-path:inset(-2px 0 -10px 0);">SOPHIEDALE_B_ROLL</span>
<svg class="i" style="left:1122px;top:160.4px" width="28" height="28" viewBox="0 0 28 28" ><polygon points="14.00,2.00 17.06,10.39 25.98,10.71 18.95,16.21 21.41,24.79 14.00,19.80 6.59,24.79 9.05,16.21 2.02,10.71 10.94,10.39" fill="none" stroke="#b6b6b6" stroke-width="1.9" stroke-linejoin="miter"/></svg>
<svg class="i" style="left:1246px;top:162px" width="258" height="28" viewBox="0 0 258 28" ><path d="M0.6 12.6 L251.6 2 Q255.6 2 255.6 6 V22 Q255.6 26 251.6 26 L0.6 15.6 Q-0.8 14.1 0.6 12.6 Z" fill="#3a3a3a"/><circle cx="157.7" cy="14" r="10.7" fill="#1d1d1d" stroke="#b9b9b9" stroke-width="2.7"/></svg>
<div class="b" style="left:1517.8px;top:151.4px;width:48.2px;height:48.6px;border-radius:9px;background:#383838"></div>
<svg class="i" style="left:1530px;top:164px" width="24" height="24" viewBox="0 0 24 24" ><rect x="0.0" y="0.0" width="6.2" height="6.2" fill="#b5b5b5"/><rect x="8.9" y="0.0" width="6.2" height="6.2" fill="#b5b5b5"/><rect x="17.8" y="0.0" width="6.2" height="6.2" fill="#b5b5b5"/><rect x="0.0" y="8.9" width="6.2" height="6.2" fill="#b5b5b5"/><rect x="8.9" y="8.9" width="6.2" height="6.2" fill="#b5b5b5"/><rect x="17.8" y="8.9" width="6.2" height="6.2" fill="#b5b5b5"/><rect x="0.0" y="17.8" width="6.2" height="6.2" fill="#b5b5b5"/><rect x="8.9" y="17.8" width="6.2" height="6.2" fill="#b5b5b5"/><rect x="17.8" y="17.8" width="6.2" height="6.2" fill="#b5b5b5"/></svg>
<svg class="i" style="left:1582.2px;top:164px" width="24.4" height="24" viewBox="0 0 24.4 24" ><rect x="0" y="0.0" width="6.2" height="6.2" fill="#b5b5b5"/><rect x="8.6" y="1.3" width="15.8" height="3.6" rx="1.6" fill="#b5b5b5"/><rect x="0" y="8.9" width="6.2" height="6.2" fill="#b5b5b5"/><rect x="8.6" y="10.2" width="15.8" height="3.6" rx="1.6" fill="#b5b5b5"/><rect x="0" y="17.8" width="6.2" height="6.2" fill="#b5b5b5"/><rect x="8.6" y="19.1" width="15.8" height="3.6" rx="1.6" fill="#b5b5b5"/></svg>
<div class="b" style="left:1631px;top:152px;width:2.2px;height:35px;background:#000"></div>
<svg class="i" style="left:1657.8px;top:164px" width="17.8" height="24.4" viewBox="0 0 17.8 24.4" ><path d="M8.9 0 L17.8 9 H0 Z M0 15.2 H17.8 L8.9 24.4 Z" fill="#a9a9a9"/></svg>
<svg class="i" style="left:1702.6px;top:164px" width="22.6" height="25" viewBox="0 0 22.6 25" ><path d="M0 0 H22.6 L14 12.4 V21 L9 25 V12.4 Z" fill="#a9a9a9"/></svg>
<svg class="i" style="left:1750.4px;top:167.6px" width="24.4" height="17.2" viewBox="0 0 24.4 17.2" ><path d="M0 8.6 C5 0.4 19.4 0.4 24.4 8.6 C19.4 16.8 5 16.8 0 8.6 Z" fill="#b7b7b7"/><circle cx="12.2" cy="8.4" r="6.4" fill="#1d1d1d"/><circle cx="12.2" cy="8.4" r="4" fill="#b7b7b7"/><circle cx="14" cy="6.6" r="1.7" fill="#1d1d1d"/></svg>
<div class="field" style="left:1787.2px;top:152px;width:287px;height:47.6px;background:#080808"></div>
<svg class="i" style="left:1804px;top:164px" width="26" height="26" viewBox="0 0 26 26" ><circle cx="10.6" cy="10.4" r="8.2" fill="none" stroke="#c2c2c2" stroke-width="2.1"/><path d="M16.6 16.4 L24 23.6" stroke="#c2c2c2" stroke-width="2.3" fill="none"/></svg>
<div class="card" style="left:462.4px;top:268.9px"><svg class="im" width="281.8" height="160.2" viewBox="10 17 2480 1420" preserveAspectRatio="none"><use href="#sc0" filter="url(#bg)"/></svg><div class="ov"></div></div>
<svg class="i" style="left:485.9px;top:292.4px" width="60" height="60" viewBox="0 0 60 60" ><rect x="0" y="0" width="60" height="60" rx="9" fill="#222c3a" fill-opacity=".7"/><rect x="19.8" y="19.7" width="20.6" height="20.8" rx="2.6" fill="#999"/><path d="M24.4 30.4 L28.6 34.8 L36 25.6" fill="none" stroke="#241f1f" stroke-width="3.3"/></svg>
<span class="t" style="left:467.58px;top:565.49px;font-size:20.20px;color:#efefef;transform:scaleX(0.8912);">SOPHIEDALE_B_ROLL1360...</span>
<span class="t" style="left:467.42px;top:603.41px;font-size:15.70px;color:#949494;transform:scaleX(1.0198);">MP4 · :14</span>
<div class="card" style="left:781.9px;top:268.9px"><svg class="im" width="281.8" height="160.2" viewBox="10 17 2480 1420" preserveAspectRatio="none"><use href="#sc1" filter="url(#bg)"/></svg><div class="ov"></div></div>
<svg class="i" style="left:805.4px;top:292.4px" width="60" height="60" viewBox="0 0 60 60" ><rect x="0" y="0" width="60" height="60" rx="9" fill="#222c3a" fill-opacity=".7"/><rect x="19.8" y="19.7" width="20.6" height="20.8" rx="2.6" fill="#999"/><path d="M24.4 30.4 L28.6 34.8 L36 25.6" fill="none" stroke="#241f1f" stroke-width="3.3"/></svg>
<span class="t" style="left:787.08px;top:565.49px;font-size:20.20px;color:#efefef;transform:scaleX(0.8936);">SOPHIEDALE_B_ROLL13696...</span>
<span class="t" style="left:786.86px;top:603.41px;font-size:15.70px;color:#949494;transform:scaleX(1.0676);">MP4 · :20</span>
<div class="card" style="left:1101.4px;top:268.9px"><svg class="im" width="281.8" height="160.2" viewBox="10 17 2480 1420" preserveAspectRatio="none"><use href="#sc2" filter="url(#bg)"/></svg><div class="ov"></div></div>
<svg class="i" style="left:1124.9px;top:292.4px" width="60" height="60" viewBox="0 0 60 60" ><rect x="0" y="0" width="60" height="60" rx="9" fill="#222c3a" fill-opacity=".7"/><rect x="19.8" y="19.7" width="20.6" height="20.8" rx="2.6" fill="#999"/><path d="M24.4 30.4 L28.6 34.8 L36 25.6" fill="none" stroke="#241f1f" stroke-width="3.3"/></svg>
<span class="t" style="left:1106.60px;top:565.49px;font-size:20.20px;color:#efefef;transform:scaleX(0.8649);">SOPHIEDALE_B_ROLL1375114</span>
<span class="t" style="left:1106.40px;top:603.41px;font-size:15.70px;color:#949494;transform:scaleX(1.0328);">MP4 · :10</span>
<div class="card" style="left:1420.9px;top:268.9px"><svg class="im" width="281.8" height="160.2" viewBox="10 17 2480 1420" preserveAspectRatio="none"><use href="#sc3" filter="url(#bg)"/></svg><div class="ov"></div></div>
<svg class="i" style="left:1444.4px;top:292.4px" width="60" height="60" viewBox="0 0 60 60" ><rect x="0" y="0" width="60" height="60" rx="9" fill="#222c3a" fill-opacity=".7"/><rect x="19.8" y="19.7" width="20.6" height="20.8" rx="2.6" fill="#999"/><path d="M24.4 30.4 L28.6 34.8 L36 25.6" fill="none" stroke="#241f1f" stroke-width="3.3"/></svg>
<span class="t" style="left:1426.08px;top:565.49px;font-size:20.20px;color:#efefef;transform:scaleX(0.8880);">SOPHIEDALE_B_ROLL13934...</span>
<span class="t" style="left:1425.91px;top:603.41px;font-size:15.70px;color:#949494;transform:scaleX(1.0268);">MP4 · :16</span>
<div class="card" style="left:1740.4px;top:268.9px"><svg class="im" width="281.8" height="160.2" viewBox="10 17 2480 1420" preserveAspectRatio="none"><use href="#sc4" filter="url(#bg)"/></svg><div class="ov"></div></div>
<svg class="i" style="left:1763.9px;top:292.4px" width="60" height="60" viewBox="0 0 60 60" ><rect x="0" y="0" width="60" height="60" rx="9" fill="#222c3a" fill-opacity=".7"/><rect x="19.8" y="19.7" width="20.6" height="20.8" rx="2.6" fill="#999"/><path d="M24.4 30.4 L28.6 34.8 L36 25.6" fill="none" stroke="#241f1f" stroke-width="3.3"/></svg>
<span class="t" style="left:1745.58px;top:565.49px;font-size:20.20px;color:#efefef;transform:scaleX(0.8908);">SOPHIEDALE_B_ROLL13964...</span>
<span class="t" style="left:1745.38px;top:603.41px;font-size:15.70px;color:#949494;transform:scaleX(1.0535);">MP4 · :27</span>
<div class="card" style="left:462.4px;top:681.3px"><svg class="im" width="281.8" height="160.2" viewBox="10 11 2480 1420" preserveAspectRatio="none"><use href="#sc5" filter="url(#bg)"/></svg><div class="ov"></div></div>
<svg class="i" style="left:485.9px;top:704.8499999999999px" width="60" height="60" viewBox="0 0 60 60" ><rect x="0" y="0" width="60" height="60" rx="9" fill="#222c3a" fill-opacity=".7"/><rect x="19.8" y="19.7" width="20.6" height="20.8" rx="2.6" fill="#999"/><path d="M24.4 30.4 L28.6 34.8 L36 25.6" fill="none" stroke="#241f1f" stroke-width="3.3"/></svg>
<span class="t" style="left:467.58px;top:977.94px;font-size:20.20px;color:#efefef;transform:scaleX(0.8870);">SOPHIEDALE_B_ROLL13977...</span>
<span class="t" style="left:467.45px;top:1015.86px;font-size:15.70px;color:#949494;transform:scaleX(0.9984);">MP4 · :11</span>
<div class="card" style="left:781.9px;top:681.3px"><svg class="im" width="281.8" height="160.2" viewBox="10 11 2480 1420" preserveAspectRatio="none"><use href="#sc6" filter="url(#bg)"/></svg><div class="ov"></div></div>
<svg class="i" style="left:805.4px;top:704.8499999999999px" width="60" height="60" viewBox="0 0 60 60" ><rect x="0" y="0" width="60" height="60" rx="9" fill="#222c3a" fill-opacity=".7"/><rect x="19.8" y="19.7" width="20.6" height="20.8" rx="2.6" fill="#999"/><path d="M24.4 30.4 L28.6 34.8 L36 25.6" fill="none" stroke="#241f1f" stroke-width="3.3"/></svg>
<span class="t" style="left:787.08px;top:977.94px;font-size:20.20px;color:#efefef;transform:scaleX(0.8929);">SOPHIEDALE_B_ROLL14254...</span>
<span class="t" style="left:786.92px;top:1015.86px;font-size:15.70px;color:#949494;transform:scaleX(1.0232);">MP4 · :21</span>
<div class="card" style="left:1101.4px;top:681.3px"><svg class="im" width="281.8" height="160.2" viewBox="10 11 2480 1420" preserveAspectRatio="none"><use href="#sc7" filter="url(#bg)"/></svg><div class="ov"></div></div>
<svg class="i" style="left:1124.9px;top:704.8499999999999px" width="60" height="60" viewBox="0 0 60 60" ><rect x="0" y="0" width="60" height="60" rx="9" fill="#222c3a" fill-opacity=".7"/><rect x="19.8" y="19.7" width="20.6" height="20.8" rx="2.6" fill="#999"/><path d="M24.4 30.4 L28.6 34.8 L36 25.6" fill="none" stroke="#241f1f" stroke-width="3.3"/></svg>
<span class="t" style="left:1106.58px;top:977.94px;font-size:20.20px;color:#efefef;transform:scaleX(0.8884);">SOPHIEDALE_B_ROLL14270...</span>
<span class="t" style="left:1106.37px;top:1015.86px;font-size:15.70px;color:#949494;transform:scaleX(1.0605);">MP4 · :24</span>
<div class="card" style="left:1420.9px;top:681.3px"><svg class="im" width="281.8" height="160.2" viewBox="10 11 2480 1420" preserveAspectRatio="none"><use href="#sc8" filter="url(#bg)"/></svg><div class="ov"></div></div>
<svg class="i" style="left:1444.4px;top:704.8499999999999px" width="60" height="60" viewBox="0 0 60 60" ><rect x="0" y="0" width="60" height="60" rx="9" fill="#222c3a" fill-opacity=".7"/><rect x="19.8" y="19.7" width="20.6" height="20.8" rx="2.6" fill="#999"/><path d="M24.4 30.4 L28.6 34.8 L36 25.6" fill="none" stroke="#241f1f" stroke-width="3.3"/></svg>
<span class="t" style="left:1426.11px;top:977.94px;font-size:20.20px;color:#efefef;transform:scaleX(0.8513);">SOPHIEDALE_B_ROLL1431111</span>
<span class="t" style="left:1425.88px;top:1015.86px;font-size:15.70px;color:#949494;transform:scaleX(1.0519);">MP4 · :27</span>
<div class="card" style="left:1740.4px;top:681.3px"><svg class="im" width="281.8" height="160.2" viewBox="10 11 2480 1420" preserveAspectRatio="none"><use href="#sc9" filter="url(#bg)"/></svg><div class="ov"></div></div>
<svg class="i" style="left:1763.9px;top:704.8499999999999px" width="60" height="60" viewBox="0 0 60 60" ><rect x="0" y="0" width="60" height="60" rx="9" fill="#222c3a" fill-opacity=".7"/><rect x="19.8" y="19.7" width="20.6" height="20.8" rx="2.6" fill="#999"/><path d="M24.4 30.4 L28.6 34.8 L36 25.6" fill="none" stroke="#241f1f" stroke-width="3.3"/></svg>
<span class="t" style="left:1745.58px;top:977.94px;font-size:20.20px;color:#efefef;transform:scaleX(0.8887);">SOPHIEDALE_B_ROLL14330...</span>
<span class="t" style="left:1745.42px;top:1015.86px;font-size:15.70px;color:#949494;transform:scaleX(1.0156);">MP4 · :17</span>
<div class="card" style="left:462.4px;top:1093.8px"><svg class="im" width="281.8" height="160.2" viewBox="10 9 2480 1420" preserveAspectRatio="none"><use href="#sc10" filter="url(#bg)"/></svg><div class="ov"></div></div>
<svg class="i" style="left:485.9px;top:1117.3px" width="60" height="60" viewBox="0 0 60 60" ><rect x="0" y="0" width="60" height="60" rx="9" fill="#222c3a" fill-opacity=".7"/><rect x="19.8" y="19.7" width="20.6" height="20.8" rx="2.6" fill="#999"/><path d="M24.4 30.4 L28.6 34.8 L36 25.6" fill="none" stroke="#241f1f" stroke-width="3.3"/></svg>
<div class="card" style="left:781.9px;top:1093.8px"><svg class="im" width="281.8" height="160.2" viewBox="10 9 2480 1420" preserveAspectRatio="none"><use href="#sc11" filter="url(#bg)"/></svg><div class="ov"></div></div>
<svg class="i" style="left:805.4px;top:1117.3px" width="60" height="60" viewBox="0 0 60 60" ><rect x="0" y="0" width="60" height="60" rx="9" fill="#222c3a" fill-opacity=".7"/><rect x="19.8" y="19.7" width="20.6" height="20.8" rx="2.6" fill="#999"/><path d="M24.4 30.4 L28.6 34.8 L36 25.6" fill="none" stroke="#241f1f" stroke-width="3.3"/></svg>
<div class="card" style="left:1101.4px;top:1093.8px"><svg class="im" width="281.8" height="160.2" viewBox="10 9 2480 1420" preserveAspectRatio="none"><use href="#sc12" filter="url(#bg)"/></svg><div class="ov"></div></div>
<svg class="i" style="left:1124.9px;top:1117.3px" width="60" height="60" viewBox="0 0 60 60" ><rect x="0" y="0" width="60" height="60" rx="9" fill="#222c3a" fill-opacity=".7"/><rect x="19.8" y="19.7" width="20.6" height="20.8" rx="2.6" fill="#999"/><path d="M24.4 30.4 L28.6 34.8 L36 25.6" fill="none" stroke="#241f1f" stroke-width="3.3"/></svg>
<div class="card" style="left:1420.9px;top:1093.8px"><svg class="im" width="281.8" height="160.2" viewBox="10 9 2480 1420" preserveAspectRatio="none"><use href="#sc13" filter="url(#bg)"/></svg><div class="ov"></div></div>
<svg class="i" style="left:1444.4px;top:1117.3px" width="60" height="60" viewBox="0 0 60 60" ><rect x="0" y="0" width="60" height="60" rx="9" fill="#222c3a" fill-opacity=".7"/><rect x="19.8" y="19.7" width="20.6" height="20.8" rx="2.6" fill="#999"/><path d="M24.4 30.4 L28.6 34.8 L36 25.6" fill="none" stroke="#241f1f" stroke-width="3.3"/></svg>
<div class="b" id="gband"></div>
<div class="b" id="vscroll"></div>
<div class="b" id="vdiv"></div>
<div class="hl" style="top:193.2px"></div>
<div class="hl" style="top:253.4px"></div>
<div class="hl" style="top:422.4px"></div>
<div class="hl" style="top:482.2px"></div>
<div class="hl" style="top:880.4px"></div>
<span class="t" style="left:2127.17px;top:143.71px;font-size:23.26px;color:#e6e6e6;transform:scaleX(0.9678);">Import settings</span>
<svg class="i" style="left:2128.6px;top:217.6px" width="9.4" height="14" viewBox="0 0 9.4 14" ><path d="M1.3 1.3 L8.1 7.0 L1.3 12.7" fill="none" stroke="#808080" stroke-width="2.6" stroke-linecap="round" stroke-linejoin="round"/></svg>
<span class="t" style="left:2154.88px;top:211.72px;font-size:20.06px;color:#9e9e9e;transform:scaleX(0.9189);">Copy media</span>
<svg class="i" style="left:2494.2px;top:211px" width="39" height="22" viewBox="0 0 39 22" ><rect x="0" y="0" width="39" height="22" rx="11" fill="#393939"/><circle cx="11" cy="11" r="9.4" fill="#1d1d1d" stroke="#8e8e8e" stroke-width="3"/></svg>
<svg class="i" style="left:2129px;top:277.2px" width="14.6" height="8.8" viewBox="0 0 14.6 8.8" ><path d="M1.3 1.3 L7.3 7.500000000000001 L13.299999999999999 1.3" fill="none" stroke="#808080" stroke-width="2.6" stroke-linecap="round" stroke-linejoin="round"/></svg>
<span class="t" style="left:2154.34px;top:272.42px;font-size:20.06px;color:#9e9e9e;transform:scaleX(0.9694);">New bin</span>
<svg class="i" style="left:2494.2px;top:271.2px" width="39" height="22" viewBox="0 0 39 22" ><rect x="0" y="0" width="39" height="22" rx="11" fill="#2680eb"/><circle cx="28" cy="11" r="8.6" fill="#1d1d1d" stroke="#2680eb" stroke-width="2.6"/></svg>
<span class="t" style="left:2127.26px;top:324.53px;font-size:17.44px;color:#bcbcbc;transform:scaleX(0.9596);">Name</span>
<div class="field" style="left:2128.6px;top:350.8px;width:408px;height:47.6px;background:#080808"></div>
<span class="t" style="left:2154.64px;top:361.83px;font-size:21.22px;color:#fff;transform:scaleX(0.9234);">Interview</span>
<svg class="i" style="left:2128.6px;top:446.4px" width="9.4" height="14" viewBox="0 0 9.4 14" ><path d="M1.3 1.3 L8.1 7.0 L1.3 12.7" fill="none" stroke="#808080" stroke-width="2.6" stroke-linecap="round" stroke-linejoin="round"/></svg>
<span class="t" style="left:2154.89px;top:440.92px;font-size:20.06px;color:#9e9e9e;transform:scaleX(0.9048);">Create new sequence</span>
<svg class="i" style="left:2494.2px;top:440px" width="39" height="22" viewBox="0 0 39 22" ><rect x="0" y="0" width="39" height="22" rx="11" fill="#393939"/><circle cx="11" cy="11" r="9.4" fill="#1d1d1d" stroke="#8e8e8e" stroke-width="3"/></svg>
<svg class="i" style="left:2129px;top:506.6px" width="14.6" height="8.8" viewBox="0 0 14.6 8.8" ><path d="M1.3 1.3 L7.3 7.500000000000001 L13.299999999999999 1.3" fill="none" stroke="#808080" stroke-width="2.6" stroke-linecap="round" stroke-linejoin="round"/></svg>
<span class="t" style="left:2155.60px;top:500.92px;font-size:20.06px;color:#9e9e9e;transform:scaleX(0.9360);">Automatic transcription</span>
<svg class="i" style="left:2494.2px;top:500px" width="39" height="22" viewBox="0 0 39 22" ><rect x="0" y="0" width="39" height="22" rx="11" fill="#2680eb"/><circle cx="28" cy="11" r="8.6" fill="#1d1d1d" stroke="#2680eb" stroke-width="2.6"/></svg>
<span class="t" style="left:2127.36px;top:551.74px;font-size:18.02px;color:#bcbcbc;transform:scaleX(0.8630);">Language</span>
<div class="field" style="left:2128.4px;top:579.8px;width:405.2px;height:47.6px"></div>
<span class="t" style="left:2146.26px;top:595.20px;font-size:20.78px;color:#bcbcbc;transform:scaleX(0.8662);">English</span>
<svg class="i" style="left:2498.8px;top:599px" width="15.6" height="9.2" viewBox="0 0 15.6 9.2" ><path d="M1.5 1.5 L7.8 7.699999999999999 L14.1 1.5" fill="none" stroke="#b2b2b2" stroke-width="3" stroke-linecap="round" stroke-linejoin="round"/></svg>
<span class="t" style="left:2127.78px;top:666.94px;font-size:18.02px;color:#bcbcbc;transform:scaleX(0.8624);">Speaker labeling</span>
<div class="field" style="left:2128.4px;top:694.8px;width:405.2px;height:47.6px"></div>
<span class="t" style="left:2147.55px;top:709.10px;font-size:20.78px;color:#bcbcbc;transform:scaleX(0.8323);">Yes, separate speakers</span>
<svg class="i" style="left:2498.8px;top:714.2px" width="15.6" height="9.2" viewBox="0 0 15.6 9.2" ><path d="M1.5 1.5 L7.8 7.699999999999999 L14.1 1.5" fill="none" stroke="#b2b2b2" stroke-width="3" stroke-linecap="round" stroke-linejoin="round"/></svg>
<span class="t" style="left:2128.09px;top:781.74px;font-size:18.02px;color:#bcbcbc;transform:scaleX(0.8610);">Transcription preferences</span>
<div class="field" style="left:2128.4px;top:809.4px;width:405.2px;height:47.6px;background:#2d2d2d;border-color:#414141"></div>
<span class="t" style="left:2147.70px;top:824.32px;font-size:20.64px;color:#bcbcbc;transform:scaleX(0.9057);">Auto-transcribe all imported clips</span>
<svg class="i" style="left:2498.8px;top:829.2px" width="15.6" height="9.2" viewBox="0 0 15.6 9.2" ><path d="M1.5 1.5 L7.8 7.699999999999999 L14.1 1.5" fill="none" stroke="#b2b2b2" stroke-width="3" stroke-linecap="round" stroke-linejoin="round"/></svg>
<div class="field" style="left:2128.8px;top:858.4px;width:404.6px;height:111.6px;background:#080808;border-color:#464646;border-width:1.4px;overflow:hidden"><div style="position:absolute;left:0;right:0;top:54px;height:49px;background:#1c1c1c"></div></div>
<span class="t" style="left:2147.70px;top:879.72px;font-size:20.06px;color:#bcbcbc;transform:scaleX(0.9175);">Auto-transcribe only clips in sequence</span>
<span class="t" style="left:2147.70px;top:928.65px;font-size:20.49px;color:#bcbcbc;transform:scaleX(0.9121);">Auto-transcribe all imported clips</span>
<svg class="i" style="left:2498px;top:931px" width="18" height="16" viewBox="0 0 18 16" ><path d="M1.8 8.6 L6.4 13.2 L15.4 2" fill="none" stroke="#2680eb" stroke-width="2.7"/></svg>
<div class="b" id="tray"></div><div class="b" id="below"></div>
<div class="tt" style="left:32.9px"><svg width="81.2" height="80.6" viewBox="540 0 1420 1420" preserveAspectRatio="none"><use href="#sc14"/></svg></div>
<div class="tt" style="left:128.9px"><svg width="81.2" height="80.6" viewBox="540 17 1420 1420" preserveAspectRatio="none"><use href="#sc0"/></svg></div>
<div class="tt" style="left:225.0px"><svg width="81.2" height="80.6" viewBox="540 17 1420 1420" preserveAspectRatio="none"><use href="#sc1"/></svg></div>
<div class="tt" style="left:321.0px"><svg width="81.2" height="80.6" viewBox="540 17 1420 1420" preserveAspectRatio="none"><use href="#sc2"/></svg></div>
<div class="tt" style="left:417.0px"><svg width="81.2" height="80.6" viewBox="540 17 1420 1420" preserveAspectRatio="none"><use href="#sc3"/></svg></div>
<div class="tt" style="left:513.0px"><svg width="81.2" height="80.6" viewBox="540 11 1420 1420" preserveAspectRatio="none"><use href="#sc5"/></svg></div>
<div class="tt" style="left:609.1px"><svg width="81.2" height="80.6" viewBox="540 11 1420 1420" preserveAspectRatio="none"><use href="#sc6"/></svg></div>
<div class="tt" style="left:705.1px"><svg width="81.2" height="80.6" viewBox="540 11 1420 1420" preserveAspectRatio="none"><use href="#sc7"/></svg></div>
<div class="tt" style="left:801.1px"><svg width="81.2" height="80.6" viewBox="540 11 1420 1420" preserveAspectRatio="none"><use href="#sc8"/></svg></div>
<div class="tt" style="left:897.2px"><svg width="81.2" height="80.6" viewBox="540 17 1420 1420" preserveAspectRatio="none"><use href="#sc4"/></svg></div>
<div class="tt" style="left:993.2px"><svg width="81.2" height="80.6" viewBox="540 11 1420 1420" preserveAspectRatio="none"><use href="#sc9"/></svg></div>
<div class="tt" style="left:1089.2px"><svg width="81.2" height="80.6" viewBox="540 9 1420 1420" preserveAspectRatio="none"><use href="#sc10"/></svg></div>
<div class="tt" style="left:1185.3px"><svg width="81.2" height="80.6" viewBox="540 9 1420 1420" preserveAspectRatio="none"><use href="#sc11"/></svg></div>
<div class="tt" style="left:1281.3px"><svg width="81.2" height="80.6" viewBox="540 9 1420 1420" preserveAspectRatio="none"><use href="#sc12"/></svg></div>
<div class="tt" style="left:1377.3px"><svg width="81.2" height="80.6" viewBox="540 9 1420 1420" preserveAspectRatio="none"><use href="#sc13"/></svg></div>
<div class="b" id="strack"></div><div class="b" id="sthumb"></div>
<div class="b" id="importbtn"></div>
<span class="t" style="left:2447.90px;top:1431.40px;font-size:20.78px;color:#fff;transform:scaleX(1.0161);">Import</span>
</body></html>
